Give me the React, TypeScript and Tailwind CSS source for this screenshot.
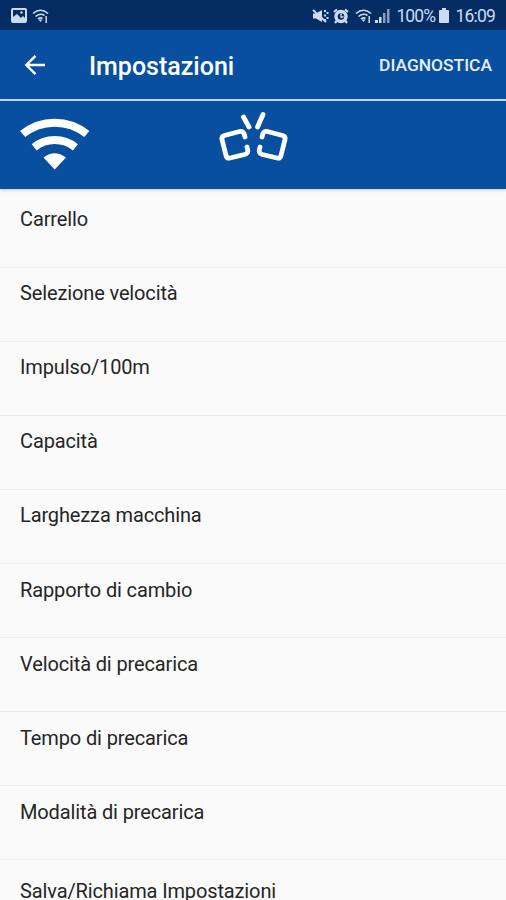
const settings = [
  'Carrello',
  'Selezione velocità',
  'Impulso/100m',
  'Capacità',
  'Larghezza macchina',
  'Rapporto di cambio',
  'Velocità di precarica',
  'Tempo di precarica',
  'Modalità di precarica',
];

function SmallWifi() {
  return (
    <svg className="h-4 w-[17px]" viewBox="0 0 17 16" fill="none" stroke="currentColor" strokeWidth="1.6">
      <path d="M1 5.500Q8.500-1 16 5.500M3.500 8.500Q8.500 4.500 12.500 7.500M6 11Q8.500 9 10.500 10.500" />
      <path d="M6.500 11.500h4l-2 2.500z" fill="currentColor" stroke="none" />
      <path d="M14.200 15V8" strokeWidth="1.500" />
    </svg>
  );
}

function StatusBar() {
  return (
    <div className="flex h-[30px] shrink-0 items-center bg-[#052d63] pl-[11px] pr-[11px] pt-px text-[#ccdcf0]">
      <svg className="h-[15px] w-4" viewBox="0 0 16 15">
        <path fill="currentColor" fillRule="evenodd" d="M2 0h12q2 0 2 2v11q0 2-2 2H2q-2 0-2-2V2q0-2 2-2zm0 2v7l4-3 4 4 2-2 2 2V2z" />
        <circle cx="10.500" cy="4.500" r="1.200" fill="currentColor" />
      </svg>
      <div className="ml-[5px]">
        <SmallWifi />
      </div>
      <div className="ml-auto flex items-center">
        <svg className="h-4 w-[17px]" viewBox="0 0 17 16" fill="currentColor">
          <path d="M1 5.500h3L10 2v12l-6-3.500H1z" />
          <path d="M1 2l13 12" stroke="currentColor" strokeWidth="1.800" fill="none" />
          <path d="M12 2h2v2h-2zM14.500 4h2v2h-2zM12 6.500h2v2h-2zM14.500 9h2v2h-2zM12 11h2v2h-2z" />
        </svg>
        <svg className="ml-[4px] h-4 w-4" viewBox="0 0 16 16" fill="none" stroke="currentColor">
          <circle cx="8" cy="8.500" r="5" strokeWidth="3.400" />
          <path d="M8 5.500v3.500h2.500" strokeWidth="1.300" />
          <path d="M1 4l3-2.500M15 4l-3-2.500M3.500 13L2 15M12.500 13l1.500 2" strokeWidth="2.200" />
        </svg>
        <div className="ml-[6px]">
          <SmallWifi />
        </div>
        <svg className="ml-[3px] h-[15px] w-[15px]" viewBox="0 0 15 15" fill="currentColor">
          <path d="M0 12h3v3H0zM4 9h2.500v6H4z" />
          <path d="M8 5h2.500v10H8zM12 1h2.500v14H12z" opacity=".65" />
        </svg>
        <span className="ml-[6px] mt-[3px] w-[38px] whitespace-nowrap text-[17.500px] leading-none tracking-[-0.900px]">100%</span>
        <svg className="ml-[5px] h-[15px] w-[10px]" viewBox="0 0 10 15" fill="currentColor">
          <path d="M3 0h4v2h2q1 0 1 1v11q0 1-1 1H1q-1 0-1-1V3q0-1 1-1h2z" />
        </svg>
        <span className="ml-[6px] mt-[3px] text-[17.500px] leading-none tracking-[-0.800px]">16:09</span>
      </div>
    </div>
  );
}

function ConnectionBar() {
  return (
    <div className="relative z-10 flex h-[88px] shrink-0 items-start bg-[#08509f] text-white shadow-[0_1px_3px_rgba(0,0,0,0.22)]">
      <svg className="ml-5 mt-[17px] h-[52px] w-[70px]" viewBox="20 118 70 52" fill="none" stroke="currentColor" strokeWidth="8">
        <path d="M22.600 134A51 51 0 0 1 86.800 134" />
        <path d="M34.200 147.300A33 33 0 0 1 75.400 147.300" />
        <path d="M43.500 157.500Q54.700 149 66 157.500L54.700 169.500Z" fill="currentColor" stroke="none" />
      </svg>
      <svg
        className="ml-[126px] mt-[7px] h-[58px] w-[76px]"
        viewBox="216 108 76 58"
        fill="none"
        stroke="currentColor"
        strokeWidth="4.8"
        strokeLinecap="round"
        strokeLinejoin="round"
      >
        <path d="M245 137L244 133.500Q242.500 130.800 239.500 131.500L224.500 135.500Q221.300 136.500 222 139.500L226 155.500Q227 158.800 230 158L244.500 154.500Q248 153.500 247.800 150.500L247 147" />
        <path d="M262 137L263 133.500Q264.500 130.800 267.500 131.500L282.500 135.500Q285.700 136.500 285 139.500L281 155.500Q280 158.800 277 158L262.500 154.500Q259 153.500 259.200 150.500L260 147" />
        <path d="M243.500 117L249 127M263 114.500L257.500 127" />
      </svg>
    </div>
  );
}

export default function App() {
  return (
    <div className="flex h-[900px] w-[506px] flex-col overflow-hidden bg-[#fafafa] font-[Roboto,sans-serif]">
      <StatusBar />
      <header className="flex h-[71px] shrink-0 items-center border-b-2 border-[#c4dcf6] bg-[#08509f] text-white">
        <svg className="ml-[24px] h-[22px] w-[22px]" viewBox="0 0 22 22" fill="none" stroke="currentColor" strokeWidth="2.400">
          <path d="M21 11H3M11.500 1.800L2.300 11l9.200 9.200" />
        </svg>
        <h1 className="ml-[43px] mt-[3px] text-[25px] font-medium leading-none">Impostazioni</h1>
        <button className="ml-auto mr-[14px] mt-[2px] text-[17.400px] font-medium leading-none text-[#e6effa]">DIAGNOSTICA</button>
      </header>
      <ConnectionBar />
      <ul className="pt-[4.600px] text-[20px] leading-[24px] tracking-[-0.130px] text-[#252525]">
        {settings.map((label) => (
          <li key={label} className="h-[74.100px] border-b border-[#ececec] pl-5 pt-[13.500px]">
            {label}
          </li>
        ))}
        <li className="pl-5 pt-[18.500px]">Salva/Richiama Impostazioni</li>
      </ul>
    </div>
  );
}
